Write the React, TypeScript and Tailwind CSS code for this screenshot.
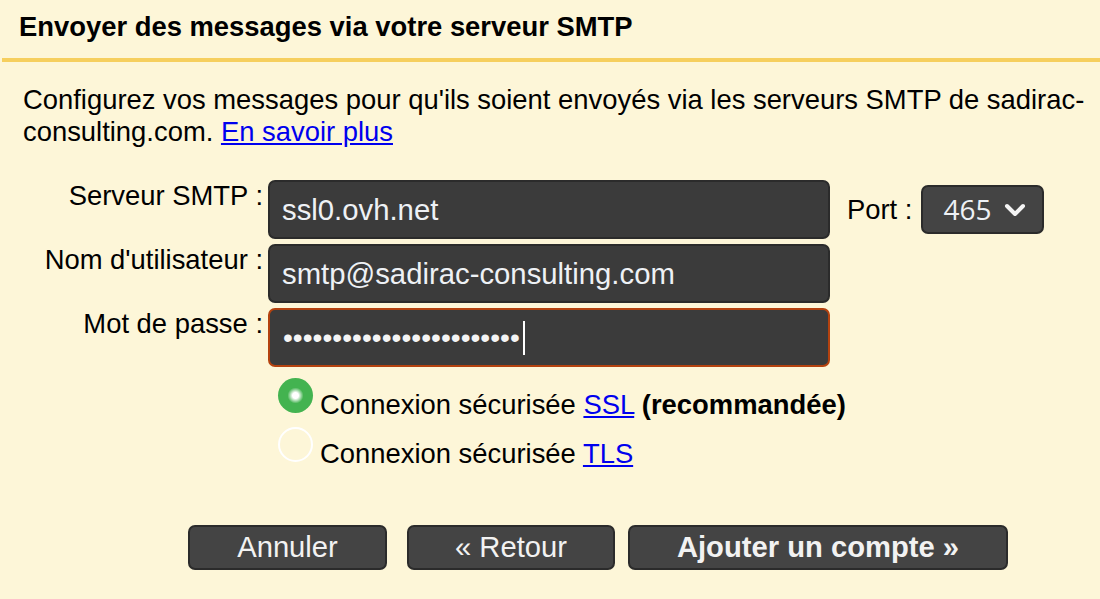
export default function App() {
  const font = { fontFamily: '"Liberation Sans", Arial, sans-serif' };
  return (
    <div className="w-[1100px] h-[599px] bg-[#fdf6d8] text-black overflow-hidden text-[27.4px] leading-[31.5px]" style={font}>
      <div className="pl-[19px] pt-[11px] h-[62px]">
        <div className="font-bold">Envoyer des messages via votre serveur SMTP</div>
      </div>
      <div className="ml-[2px] h-[4px] bg-[#f6cf5e] -mt-[4px]" />

      <div className="pl-[23px] pr-[10px] pt-[22px]">
        <p>
          Configurez vos messages pour qu'ils soient envoyés via les serveurs SMTP de sadirac-consulting.com.{' '}
          <a href="#" className="text-[#0000ee] underline">En savoir plus</a>
        </p>
      </div>

      <div className="mt-[33px] flex flex-col gap-[5px]">
        <div className="flex items-start">
          <div className="w-[263px] text-right shrink-0">Serveur SMTP :</div>
          <div className="ml-[5px] w-[562px] h-[59px] rounded-[7px] border-2 border-[#2b2b2b] bg-[#3b3b3b] flex items-center pl-[12px] text-[29.3px] text-[#eef1f5]">
            ssl0.ovh.net
          </div>
          <div className="self-center flex items-center ml-[17px]">
            <span>Port :</span>
            <div className="ml-[9px] w-[123px] h-[49px] rounded-[7px] border-2 border-[#2b2b2b] bg-[#444444] flex items-center pl-[20px] text-[28px] text-[#eef1f5]" style={{ fontFamily: '"Open Sans", sans-serif' }}>
              <span>465</span>
              <svg width="22" height="14" viewBox="0 0 22 14" className="ml-[12px] mt-[1px]">
                <polyline points="3,3 11,11 19,3" fill="none" stroke="#f4f4f4" strokeWidth="4" strokeLinecap="round" strokeLinejoin="round" />
              </svg>
            </div>
          </div>
        </div>
        <div className="flex items-start">
          <div className="w-[263px] text-right shrink-0">Nom d'utilisateur :</div>
          <div className="ml-[5px] w-[562px] h-[59px] rounded-[7px] border-2 border-[#2b2b2b] bg-[#3b3b3b] flex items-center pl-[12px] text-[29.3px] text-[#eef1f5]">
            smtp@sadirac-consulting.com
          </div>
        </div>
        <div className="flex items-start">
          <div className="w-[263px] text-right shrink-0">Mot de passe :</div>
          <div className="ml-[5px] w-[562px] h-[59px] rounded-[7px] border-2 border-[#b4420f] bg-[#3b3b3b] flex items-center pl-[13px] text-[28.2px] text-[#f4f4f4]">
            <span>••••••••••••••••••••••••</span>
            <span className="ml-[3px] w-[2px] h-[34px] bg-white" />
          </div>
        </div>
      </div>

      <div className="ml-[278px] mt-[11px] flex flex-col gap-[7px]">
        <div className="flex items-end">
          <span className="mb-[7px] w-[35px] h-[35px] rounded-full bg-[radial-gradient(circle,#ffffff_0px,#ffffff_3px,#43b350_8px)] shrink-0" />
          <span className="ml-[7px]">
            Connexion sécurisée <a href="#" className="text-[#0000ee] underline">SSL</a> <b>(recommandée)</b>
          </span>
        </div>
        <div className="flex items-end">
          <span className="mb-[7px] w-[35px] h-[35px] rounded-full border-2 border-[#ffffff] shrink-0" />
          <span className="ml-[7px]">
            Connexion sécurisée <a href="#" className="text-[#0000ee] underline">TLS</a>
          </span>
        </div>
      </div>

      <div className="ml-[188px] mt-[56px] flex text-[#f2f2f2] text-[29.2px]">
        <button className="w-[199px] h-[45px] rounded-[7px] border-2 border-[#2b2b2b] bg-[#444444] flex items-center justify-center">Annuler</button>
        <button className="ml-[20px] w-[208px] h-[45px] rounded-[7px] border-2 border-[#2b2b2b] bg-[#444444] flex items-center justify-center">« Retour</button>
        <button className="ml-[13px] w-[380px] h-[45px] rounded-[7px] border-2 border-[#2b2b2b] bg-[#444444] flex items-center justify-center font-bold">Ajouter un compte »</button>
      </div>
    </div>
  );
}
